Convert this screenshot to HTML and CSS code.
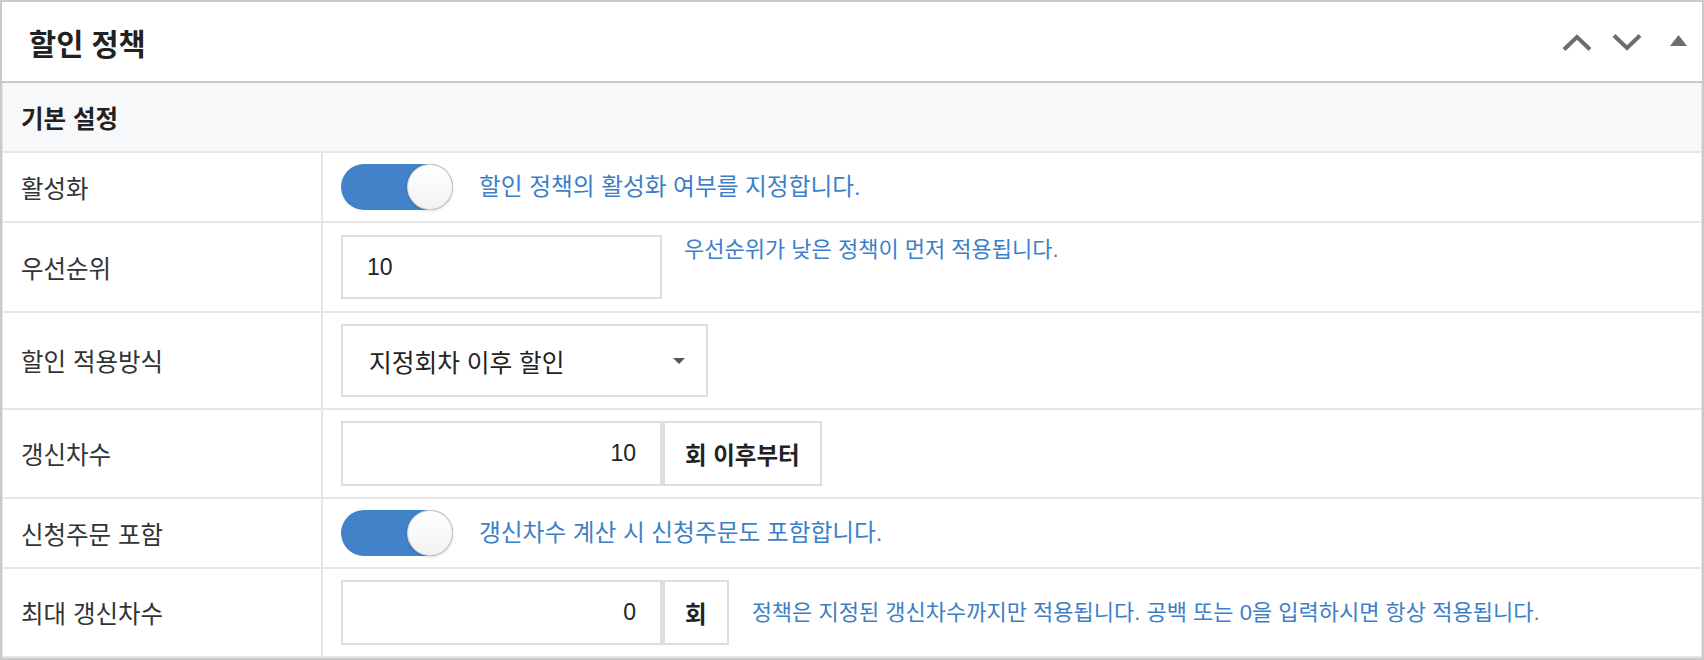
FILE: index.html
```html
<!DOCTYPE html>
<html lang="ko">
<head>
    <meta charset="UTF-8">
    <meta name="viewport" content="width=device-width, initial-scale=1.0">
    <title>할인 정책</title>
    <link rel="stylesheet" href="styles.css">
</head>
<body>
    <div class="panel">
        <div class="panel-header">
            <h2 class="panel-title">할인 정책</h2>
            <div class="panel-tools">
                <svg class="tool-up" width="30" height="17" viewBox="0 0 30 17">
                    <polyline points="2,15.5 15,3 28,15.5" fill="none" stroke="#6d6d70" stroke-width="4"/>
                </svg>
                <svg class="tool-down" width="30" height="17" viewBox="0 0 30 17">
                    <polyline points="2,1.5 15,14 28,1.5" fill="none" stroke="#6d6d70" stroke-width="4"/>
                </svg>
                <svg class="tool-collapse" width="17" height="11" viewBox="0 0 17 11">
                    <polygon points="8.5,0 17,11 0,11" fill="#6d6d70"/>
                </svg>
            </div>
        </div>

        <div class="section">
            <div class="section-title">기본 설정</div>

            <div class="row">
                <div class="row-label">활성화</div>
                <div class="row-field">
                    <span class="switch"><span class="knob"></span></span>
                    <span class="help help-switch">할인 정책의 활성화 여부를 지정합니다.</span>
                </div>
            </div>

            <div class="row">
                <div class="row-label">우선순위</div>
                <div class="row-field top">
                    <input class="text-input" type="text" value="10">
                    <span class="help help-top">우선순위가 낮은 정책이 먼저 적용됩니다.</span>
                </div>
            </div>

            <div class="row">
                <div class="row-label">할인 적용방식</div>
                <div class="row-field">
                    <div class="select">
                        <span>지정회차 이후 할인</span>
                        <span class="caret"></span>
                    </div>
                </div>
            </div>

            <div class="row">
                <div class="row-label">갱신차수</div>
                <div class="row-field">
                    <div class="input-group">
                        <input class="text-input number" type="text" value="10">
                        <span class="addon">회 이후부터</span>
                    </div>
                </div>
            </div>

            <div class="row">
                <div class="row-label">신청주문 포함</div>
                <div class="row-field">
                    <span class="switch"><span class="knob"></span></span>
                    <span class="help help-switch">갱신차수 계산 시 신청주문도 포함합니다.</span>
                </div>
            </div>

            <div class="row">
                <div class="row-label">최대 갱신차수</div>
                <div class="row-field">
                    <div class="input-group">
                        <input class="text-input number" type="text" value="0">
                        <span class="addon">회</span>
                    </div>
                    <span class="help help-group">정책은 지정된 갱신차수까지만 적용됩니다. 공백 또는 0을 입력하시면 항상 적용됩니다.</span>
                </div>
            </div>
        </div>
    </div>
</body>
</html>
```

FILE: styles.css
```css
body {
    margin: 0;
    padding: 0;
    font-family: "Liberation Sans", "Noto Sans CJK KR", sans-serif;
    color: #333;
    background-color: #fff;
}

.panel {
    border: 2px solid #c9c9cc;
    height: 656px;
    overflow: hidden;
}

.panel-header {
    height: 79px;
    display: flex;
    align-items: center;
    justify-content: space-between;
    padding: 0 15px 0 27px;
    border-bottom: 2px solid #c9c9cc;
}

.panel-title {
    margin: 0;
    font-size: 29.5px;
    font-weight: bold;
    color: #222;
}

.panel-tools {
    display: flex;
    align-items: center;
    margin-top: 2px;
}

.tool-up {
    margin-right: 20px;
}

.tool-down {
    margin-right: 28px;
}

.tool-collapse {
    margin-top: -4px;
}

.section {
    border-left: 1px solid #e6e6e6;
    border-right: 1px solid #e6e6e6;
}

.section-title {
    height: 68px;
    display: flex;
    align-items: center;
    padding-left: 18px;
    background-color: #f7f8fa;
    font-size: 24.5px;
    font-weight: bold;
    color: #222;
    border-bottom: 2px solid #e6e6e6;
}

.row {
    display: flex;
    border-bottom: 2px solid #e6e6e6;
}

.row-label {
    width: 300px;
    flex-shrink: 0;
    padding-left: 18px;
    display: flex;
    align-items: center;
    font-size: 24.5px;
    border-right: 2px solid #e6e6e6;
}

.row-field {
    flex: 1;
    display: flex;
    align-items: center;
    padding: 11px 18px;
}

.row-field.top {
    align-items: flex-start;
    padding-top: 12px;
    padding-bottom: 12px;
}

.switch {
    position: relative;
    width: 112px;
    height: 46px;
    border-radius: 23px;
    background-color: #4282c9;
    flex-shrink: 0;
}

.knob {
    position: absolute;
    top: 0;
    right: 0;
    width: 44px;
    height: 44px;
    border-radius: 50%;
    border: 1px solid #d2d2d2;
    background: linear-gradient(#fff, #f2f2f2);
    box-shadow: 0 1px 3px rgba(0, 0, 0, 0.15);
}

.help {
    color: #3d7fc6;
    font-size: 22px;
    line-height: 30px;
}

.help-switch {
    margin-left: 26px;
    font-size: 23.7px;
}

.help-top {
    margin-left: 22px;
}

.help-group {
    margin-left: 23px;
}

.text-input {
    width: 321px;
    height: 64px;
    box-sizing: border-box;
    border: 2px solid #dedede;
    padding: 0 24px;
    font-family: "Liberation Sans", "Noto Sans CJK KR", sans-serif;
    font-size: 23px;
    color: #222;
    outline: none;
}

.text-input.number {
    text-align: right;
    height: 65px;
}

.input-group {
    display: flex;
}

.addon {
    display: flex;
    align-items: center;
    height: 65px;
    box-sizing: border-box;
    padding: 0 20px;
    border: 2px solid #dedede;
    border-left-width: 3px;
    font-size: 23.5px;
    font-weight: bold;
    color: #222;
}

.select {
    width: 367px;
    height: 73px;
    box-sizing: border-box;
    border: 2px solid #dedede;
    display: flex;
    align-items: center;
    justify-content: space-between;
    padding: 0 21px 0 26px;
    font-size: 24.7px;
    color: #222;
}

.caret {
    width: 0;
    height: 0;
    border-left: 6.5px solid transparent;
    border-right: 6.5px solid transparent;
    border-top: 6px solid #555;
}
```
